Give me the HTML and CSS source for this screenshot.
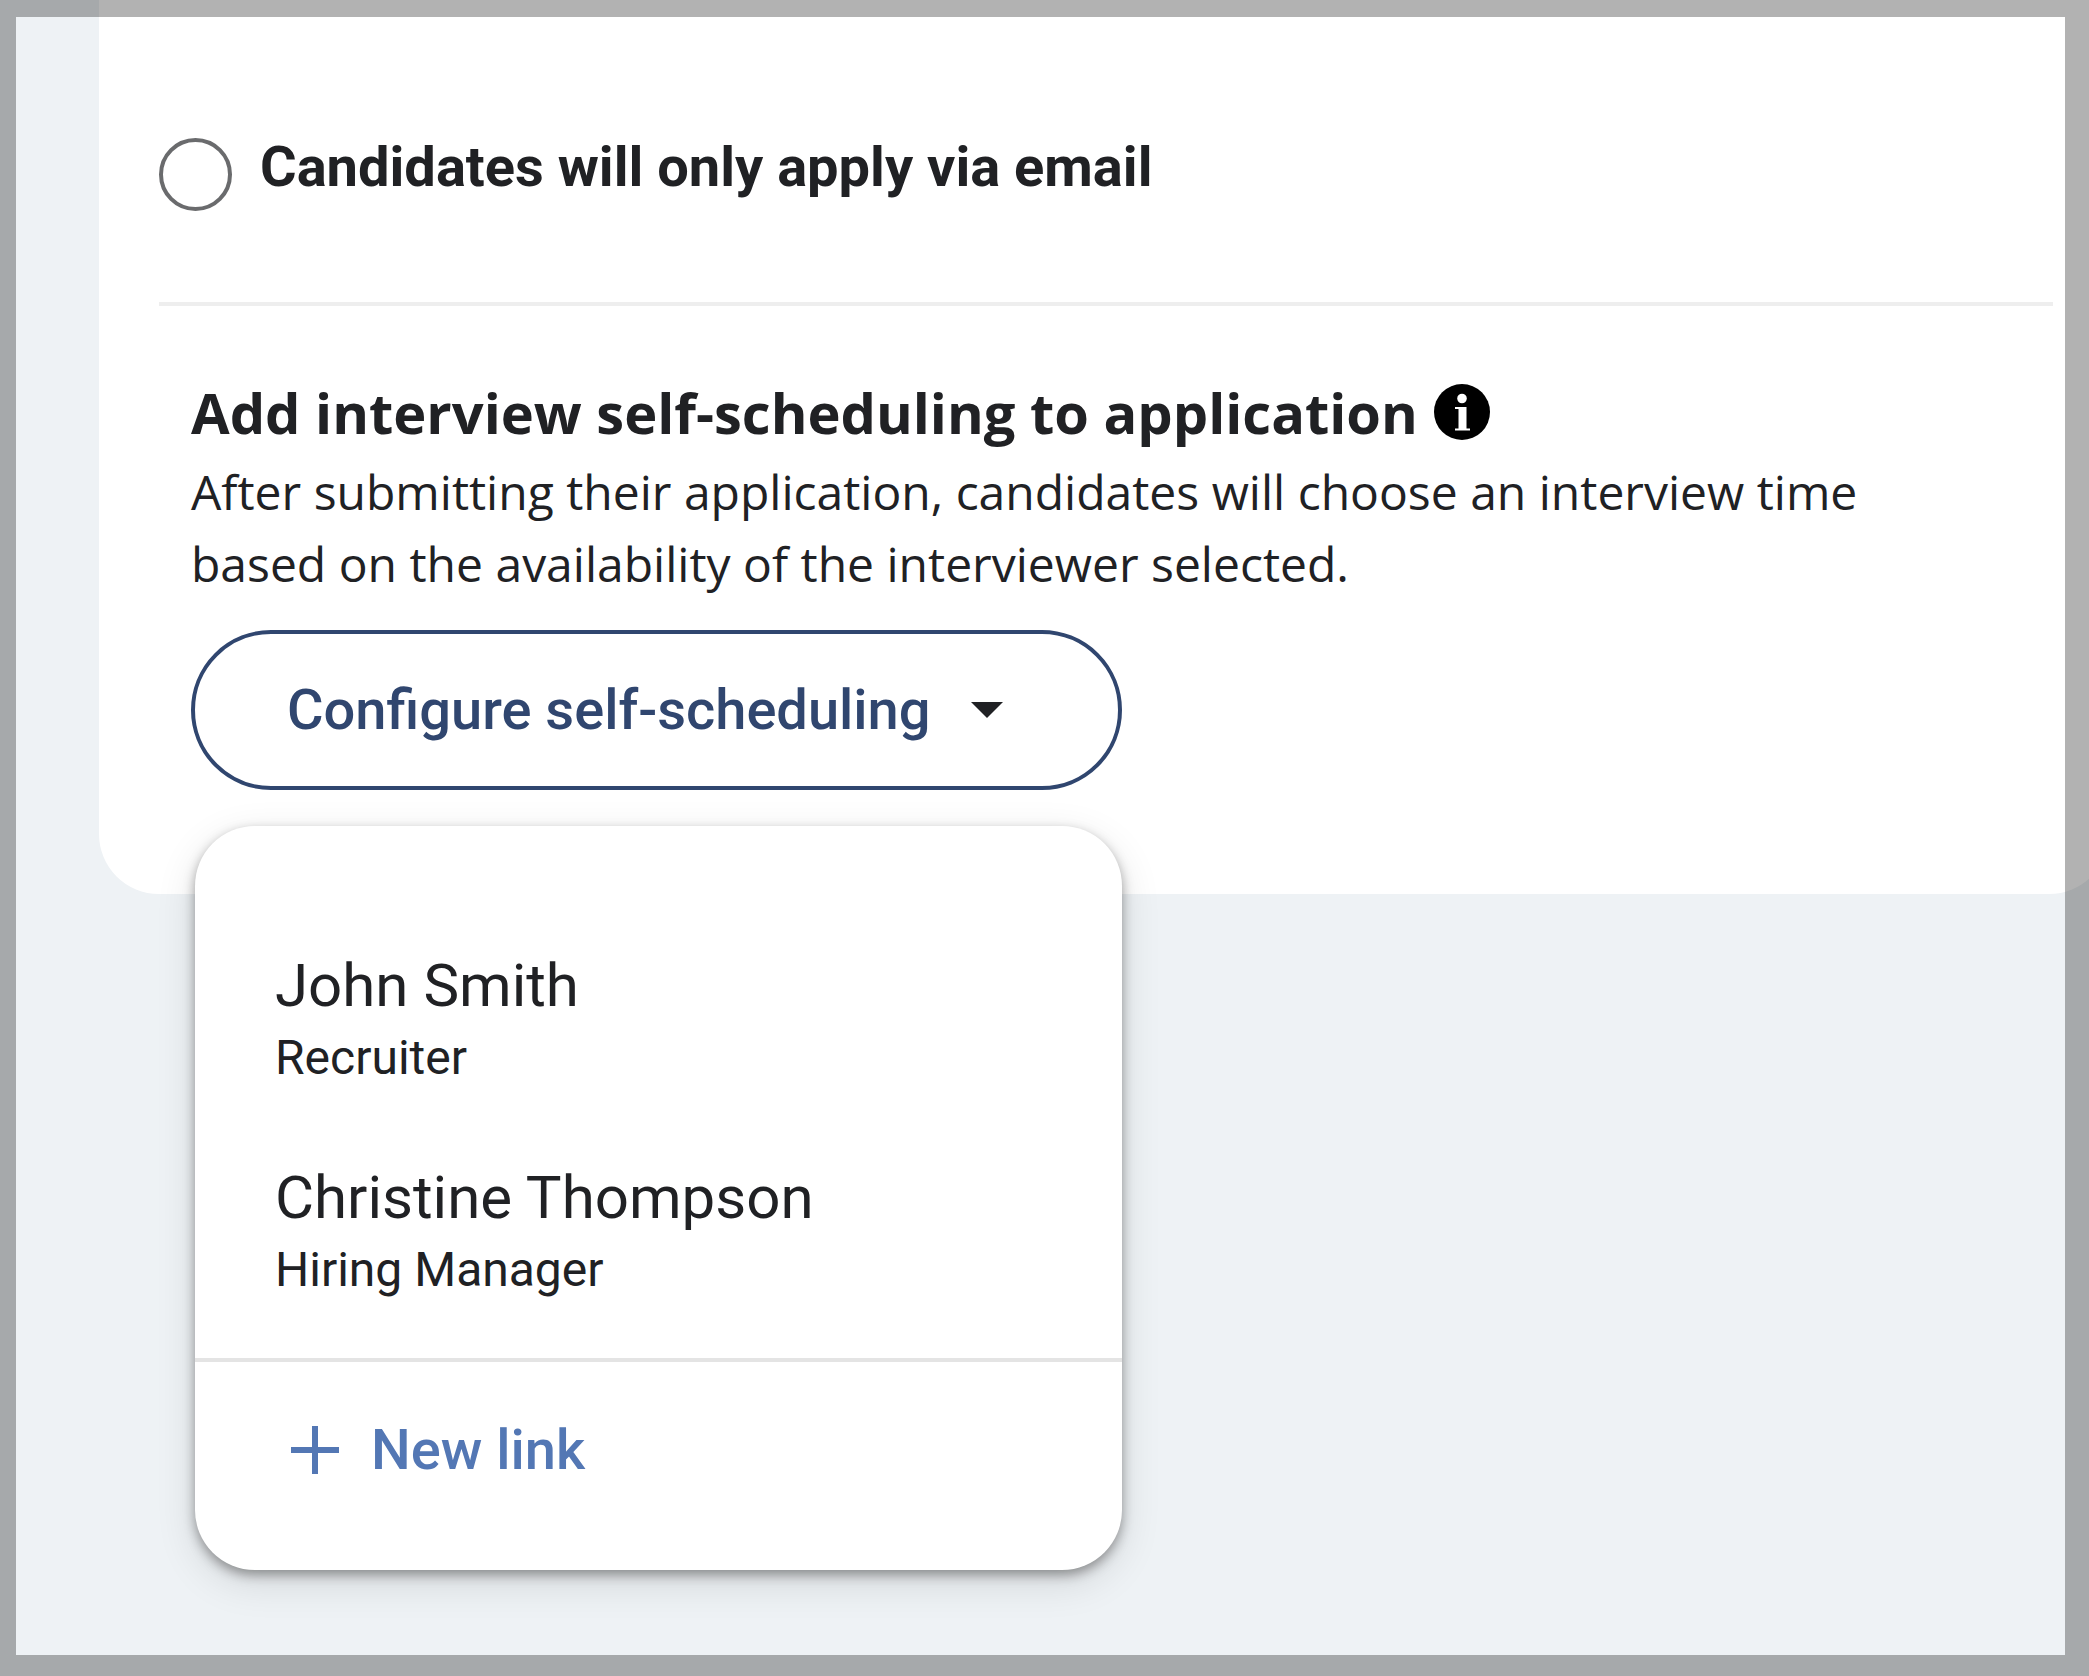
FILE: index.html
```html
<!DOCTYPE html>
<html lang="en">
<head>
    <meta charset="UTF-8">
    <meta name="viewport" content="width=device-width, initial-scale=1.0">
    <title>Application settings</title>
    <link rel="stylesheet" href="styles.css">
</head>
<body>

    <main class="card">
        <div class="option">
            <input type="radio" id="apply-email" name="apply-method" class="option-radio">
            <label for="apply-email" class="option-label">Candidates will only apply via email</label>
        </div>

        <hr class="divider">

        <section class="scheduling">
            <div class="scheduling-header">
                <h2>Add interview self-scheduling to application</h2>
                <svg class="info-icon" viewBox="0 0 56 56" role="img" aria-label="More information">
                    <circle cx="28" cy="28" r="28" fill="#000"/>
                    <circle cx="28" cy="14.5" r="4.8" fill="#fff"/>
                    <path d="M21 23h11.500v21.500h3.500v2h-15v-2h3.500v-19.500h-3.500z" fill="#fff"/>
                </svg>
            </div>
            <p>After submitting their application, candidates will choose an interview time based on the availability of the interviewer selected.</p>

            <div class="dropdown">
                <button type="button" class="dropdown-button" aria-expanded="true" aria-controls="link-menu">
                    Configure self-scheduling
                    <svg class="caret" viewBox="0 0 32 16" aria-hidden="true">
                        <path d="M0 0h32L16 16z" fill="#202124"/>
                    </svg>
                </button>

                <div id="link-menu" class="menu">
                    <ul class="people">
                        <li>
                            <button type="button" class="person">
                                <span class="person-name">John Smith</span>
                                <span class="person-role">Recruiter</span>
                            </button>
                        </li>
                        <li>
                            <button type="button" class="person">
                                <span class="person-name">Christine Thompson</span>
                                <span class="person-role">Hiring Manager</span>
                            </button>
                        </li>
                    </ul>
                    <button type="button" class="new-link">
                        <svg class="plus" viewBox="0 0 48 48" aria-hidden="true">
                            <path d="M24 0v48M0 24h48" fill="none" stroke="#5377b4" stroke-width="6"/>
                        </svg>
                        New link
                    </button>
                </div>
            </div>
        </section>
    </main>

    <!-- Translucent frame over the whole window -->
    <div class="frame"></div>

</body>
</html>
```
FILE: styles.css
```css
* {
    box-sizing: border-box;
}

body {
    margin: 0;
    min-height: 100vh;
    overflow: hidden;
    background-color: #eef2f5;
    color: #202124;
    font-family: Roboto, sans-serif;
}

button {
    border: none;
    background: none;
    color: inherit;
    font-family: inherit;
    text-align: left;
    cursor: pointer;
}

.frame {
    position: fixed;
    inset: 0;
    border: solid rgba(0, 0, 0, 0.3);
    border-width: 17px 24px 21px 16px;
    pointer-events: none;
}

/* --- Card, runs a little past the right edge --- */
.card {
    margin-left: 99px;
    margin-right: -20px;
    padding: 138px 56px 104px 60px;
    background-color: #fff;
    border-radius: 0 0 60px 60px;
}

.option {
    display: flex;
    align-items: flex-start;
    gap: 28px;
}

.option-radio {
    appearance: none;
    flex: none;
    width: 73px;
    height: 73px;
    margin: 0;
    border: 4px solid #6a6b6d;
    border-radius: 50%;
}

.option-radio:checked {
    background: radial-gradient(#30466f 50%, #fff 52%);
}

.option-label {
    font-size: 56px;
    font-weight: 700;
    line-height: 58px;
}

.divider {
    height: 4px;
    margin: 91px 0 0;
    border: none;
    background-color: #eee;
}

/* --- Self-scheduling section --- */
.scheduling {
    padding: 66px 32px 0;
    font-family: "Open Sans", sans-serif;
}

.scheduling-header {
    display: flex;
    align-items: center;
    gap: 16px;
}

h2 {
    margin: 0;
    font-size: 56px;
    font-weight: 700;
    line-height: 80px;
}

.info-icon {
    flex: none;
    width: 56px;
    height: 56px;
}

.scheduling p {
    max-width: 1740px;
    margin: 4px 0 30px;
    font-size: 48px;
    line-height: 72px;
}

.dropdown {
    position: relative;
    width: fit-content;
    font-family: Roboto, sans-serif;
}

.dropdown-button {
    display: flex;
    align-items: center;
    gap: 40px;
    height: 160px;
    padding: 0 115px 0 92px;
    border: 4px solid #30466f;
    border-radius: 80px;
    background-color: #fff;
    color: #30466f;
    font-size: 56px;
    font-weight: 500;
}

.caret {
    width: 32px;
    height: 16px;
}

/* --- Menu --- */
.menu {
    position: absolute;
    top: 100%;
    left: 4px;
    right: 0;
    margin-top: 36px;
    background-color: #fff;
    border-radius: 60px;
    box-shadow: 0 5px 12px rgba(0, 0, 0, 0.36), 0 12px 40px rgba(0, 0, 0, 0.12);
}

.people {
    display: flex;
    flex-direction: column;
    gap: 68px;
    margin: 0;
    padding: 124px 80px 52px;
    border-bottom: 4px solid #e4e4e4;
    list-style: none;
}

.person {
    display: block;
    width: 100%;
    padding: 0;
    line-height: 72px;
}

.person-name,
.person-role {
    display: block;
}

.person-name {
    font-size: 60px;
}

.person-role {
    font-size: 48px;
}

.new-link {
    display: flex;
    align-items: center;
    gap: 32px;
    width: 100%;
    padding: 52px 96px 84px;
    color: #5377b4;
    font-size: 56px;
    font-weight: 500;
    line-height: 72px;
}

.plus {
    width: 48px;
    height: 48px;
}
```
